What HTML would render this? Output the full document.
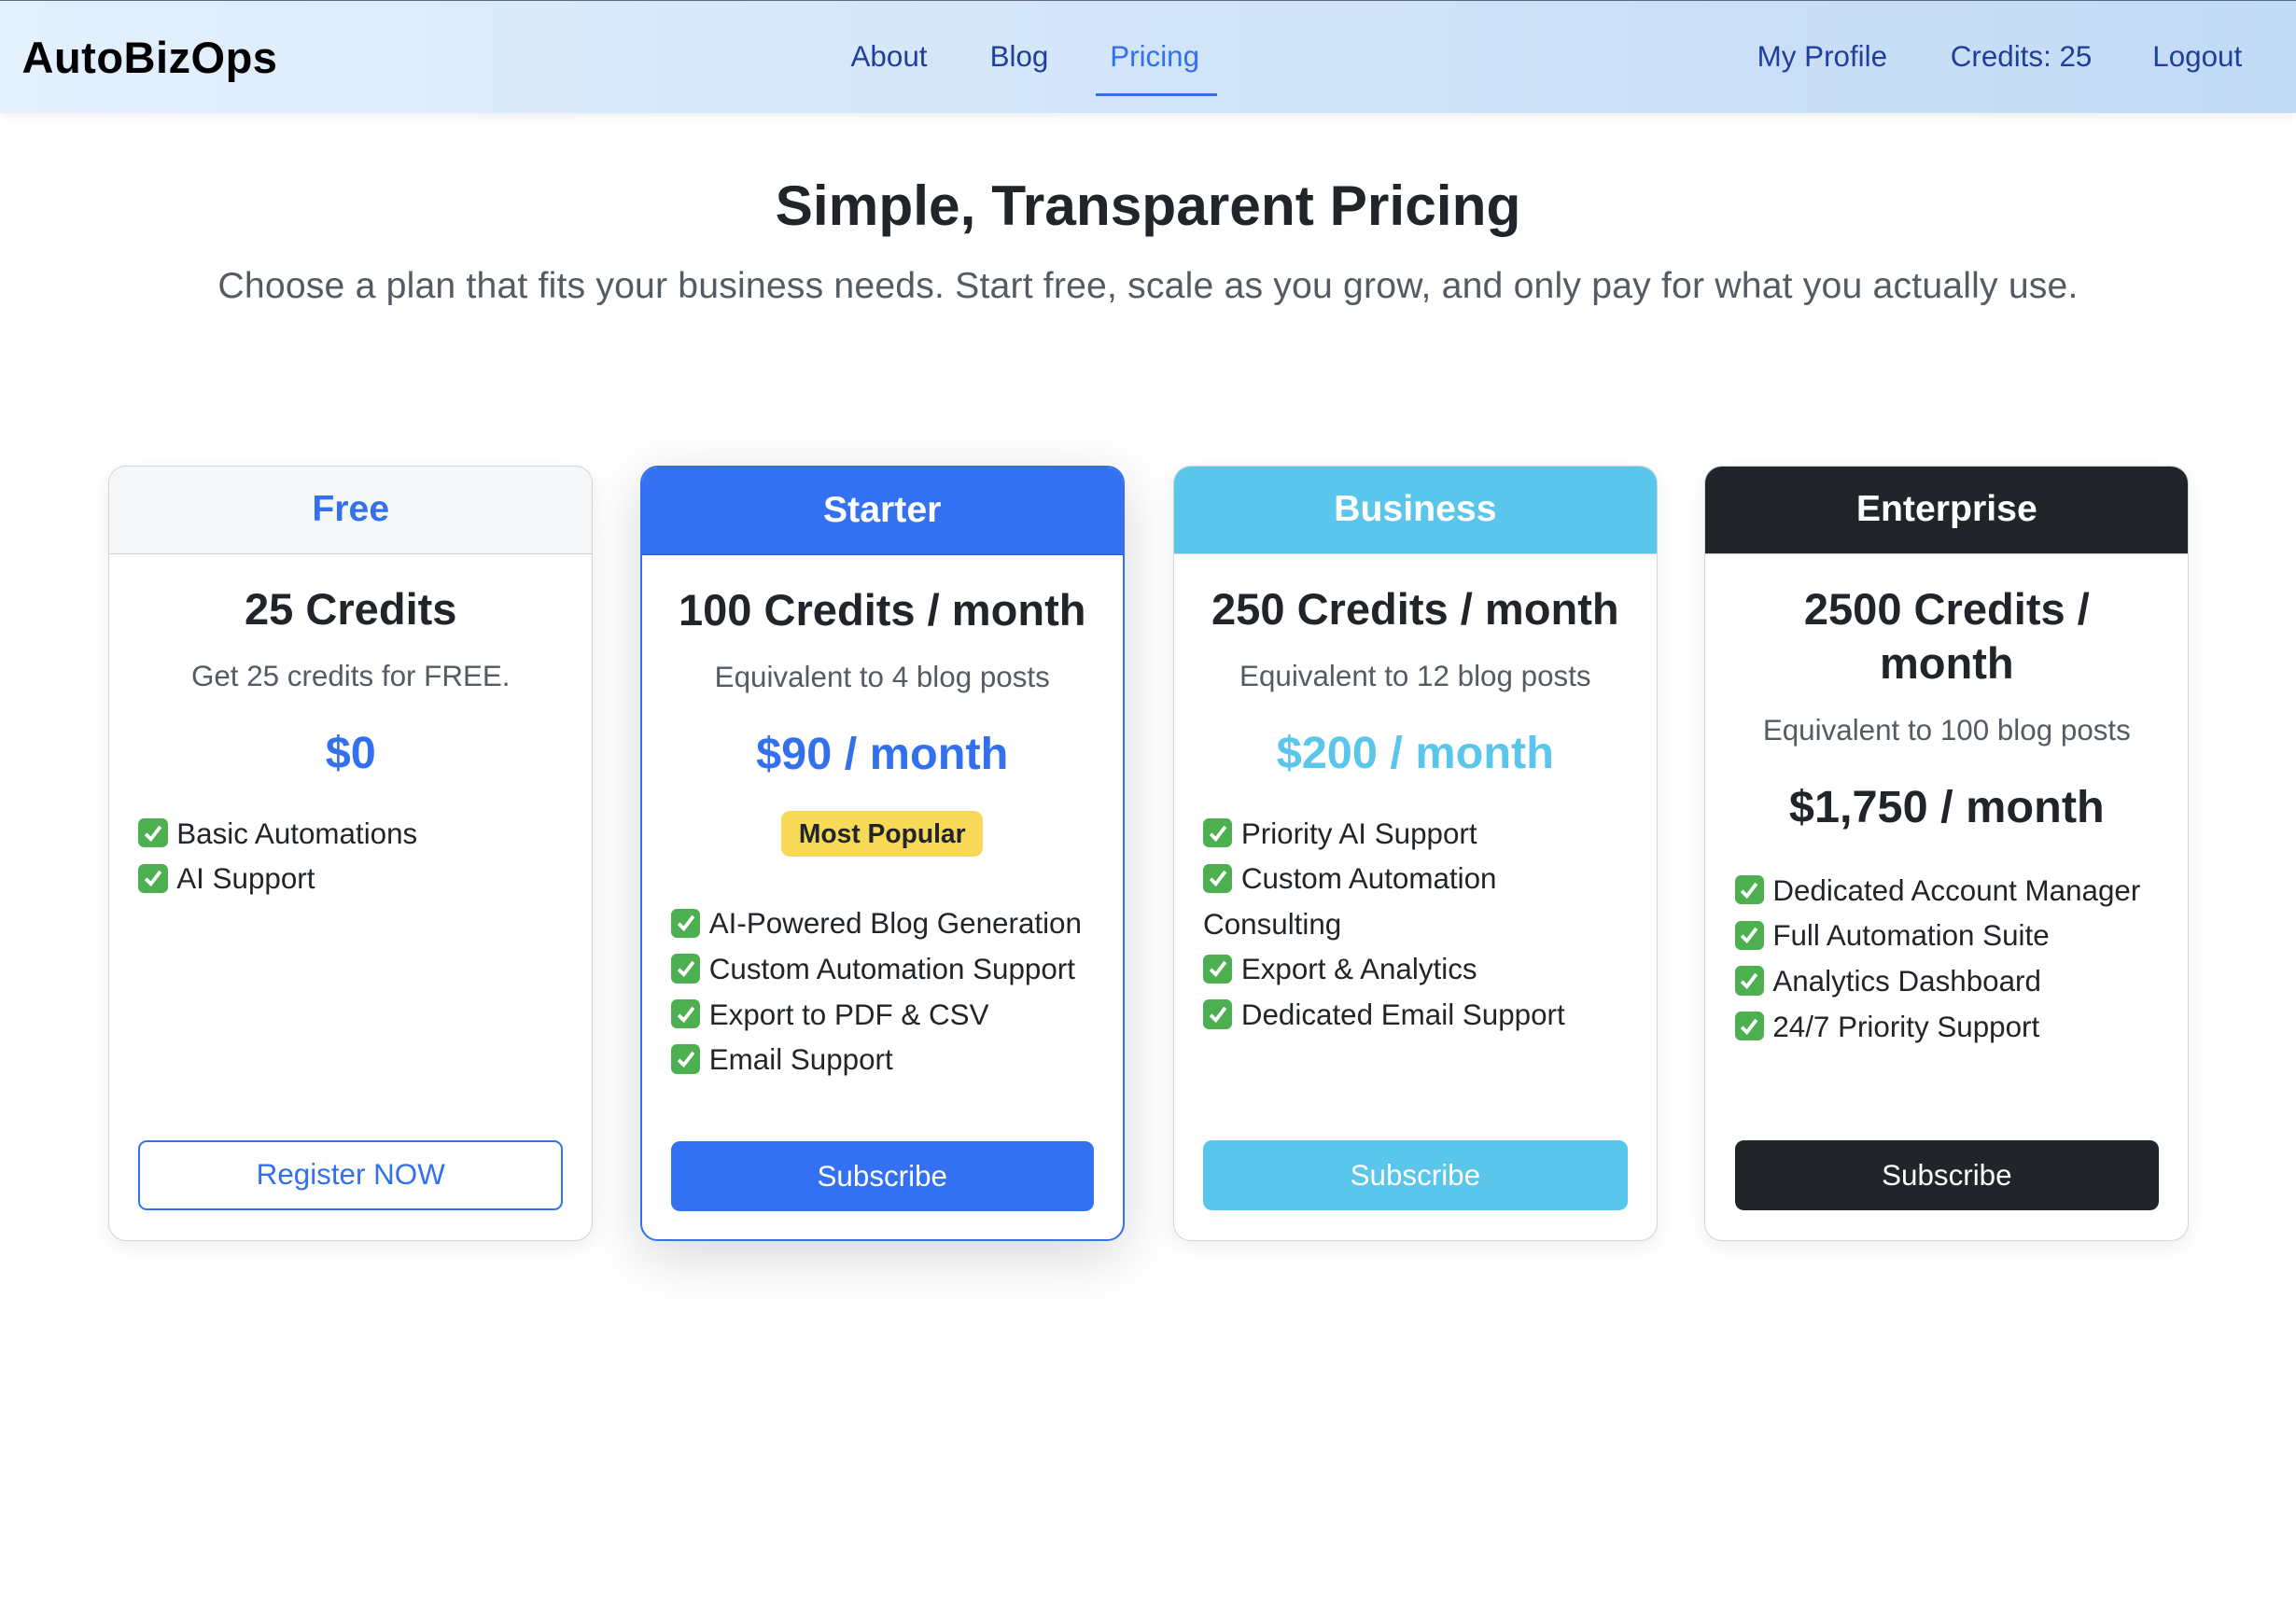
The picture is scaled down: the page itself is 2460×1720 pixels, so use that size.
<!DOCTYPE html>
<html><head><meta charset="utf-8">
<style>
html{zoom:1.56888}
*{box-sizing:border-box;margin:0;padding:0}
body{width:1568px;height:1096px;overflow:hidden;background:#fff;font-family:"Liberation Sans",Arial,sans-serif;color:#212529;position:relative}
.nav{position:absolute;left:0;top:0;width:1568px;height:77px;background:linear-gradient(90deg,#e4f0fc,#cfe2f8 60%,#c2dbf5);border-top:1px solid #5a6a80;box-shadow:0 2px 6px rgba(0,0,0,.08)}
.logo{position:absolute;left:15px;top:21px;font-size:30px;font-weight:bold;color:#000;letter-spacing:0.3px;transform:scaleX(1.0);transform-origin:left}
.nl{position:absolute;top:27px;font-size:20px;color:#1f3f9a}
.act{color:#3370ee}
.ul{position:absolute;left:748px;top:63px;width:83px;height:2px;background:#3370ee}
h1{position:absolute;left:0;width:1568px;top:118px;text-align:center;font-size:38.5px;font-weight:bold}
.sub{position:absolute;left:0;width:1568px;top:181px;text-align:center;font-size:25px;letter-spacing:0.1px;color:#555b62}
.card{position:absolute;top:318px;width:331px;height:530px;border:1px solid #d4d4d4;border-radius:12px;background:#fff;box-shadow:0 4px 14px rgba(0,0,0,.07);overflow:hidden}
.hd{height:60px;border-bottom:1px solid #d0d0d0;text-align:center;font-size:25px;font-weight:bold;line-height:58px;background:#f6f7f9;color:#3370ee}
.bd{padding:0 20px;text-align:center}
.t{font-size:30px;font-weight:bold;margin-top:19px;line-height:37px}
.d{font-size:20px;color:#555b62;margin-top:16px}
.p{font-size:31px;font-weight:bold;margin-top:23px;color:#3370ee}
.f{text-align:left;font-size:20px;line-height:31px;margin-top:22px}
.ck{display:inline-block;width:20px;height:20px;border-radius:4px;background:#4caf50;vertical-align:-3px;margin-right:6px;position:relative}
.ck svg{position:absolute;left:3px;top:3px}
.btn{position:absolute;left:20px;right:20px;top:460px;height:48px;border-radius:6px;text-align:center;line-height:48px;font-size:20px;color:#fff}
.badge{display:inline-block;background:#f7d857;border-radius:6px;padding:0 12px;height:31px;line-height:31px;font-size:18px;font-weight:bold;margin-top:21px}
</style></head><body>
<div class="nav">
<div class="logo">AutoBizOps</div>
<div class="nl" style="left:581px">About</div>
<div class="nl" style="left:676px">Blog</div>
<div class="nl act" style="left:758px">Pricing</div>
<div class="ul"></div>
<div class="nl" style="left:1200px">My Profile</div>
<div class="nl" style="left:1332px">Credits: 25</div>
<div class="nl" style="left:1470px">Logout</div>
</div>
<h1>Simple, Transparent Pricing</h1>
<div class="sub">Choose a plan that fits your business needs. Start free, scale as you grow, and only pay for what you actually use.</div>

<div class="card" style="left:74px">
<div class="hd">Free</div>
<div class="bd">
<div class="t">25 Credits</div>
<div class="d">Get 25 credits for FREE.</div>
<div class="p">$0</div>
<div class="f">
<div><span class="ck"><svg width="14" height="14" viewBox="0 0 14 14"><path d="M2 7.5L5.5 11L12 2.5" stroke="#fff" stroke-width="2.4" fill="none"/></svg></span>Basic Automations</div>
<div><span class="ck"><svg width="14" height="14" viewBox="0 0 14 14"><path d="M2 7.5L5.5 11L12 2.5" stroke="#fff" stroke-width="2.4" fill="none"/></svg></span>AI Support</div>
</div></div>
<div class="btn" style="border:1.5px solid #3370ee;color:#3370ee;background:#fff;line-height:45px">Register NOW</div>
</div>

<div class="card" style="left:437px;border:1.5px solid #3370ee;box-shadow:0 10px 40px rgba(0,0,0,.16)">
<div class="hd" style="background:#3370f2;color:#fff;border-bottom-color:#2a5fd8">Starter</div>
<div class="bd">
<div class="t">100 Credits / month</div>
<div class="d">Equivalent to 4 blog posts</div>
<div class="p">$90 / month</div>
<div class="badge">Most Popular</div>
<div class="f" style="margin-top:31px">
<div><span class="ck"><svg width="14" height="14" viewBox="0 0 14 14"><path d="M2 7.5L5.5 11L12 2.5" stroke="#fff" stroke-width="2.4" fill="none"/></svg></span>AI-Powered Blog Generation</div>
<div><span class="ck"><svg width="14" height="14" viewBox="0 0 14 14"><path d="M2 7.5L5.5 11L12 2.5" stroke="#fff" stroke-width="2.4" fill="none"/></svg></span>Custom Automation Support</div>
<div><span class="ck"><svg width="14" height="14" viewBox="0 0 14 14"><path d="M2 7.5L5.5 11L12 2.5" stroke="#fff" stroke-width="2.4" fill="none"/></svg></span>Export to PDF &amp; CSV</div>
<div><span class="ck"><svg width="14" height="14" viewBox="0 0 14 14"><path d="M2 7.5L5.5 11L12 2.5" stroke="#fff" stroke-width="2.4" fill="none"/></svg></span>Email Support</div>
</div></div>
<div class="btn" style="background:#3370f2">Subscribe</div>
</div>

<div class="card" style="left:801px">
<div class="hd" style="background:#5bc6ec;color:#fff">Business</div>
<div class="bd">
<div class="t">250 Credits / month</div>
<div class="d">Equivalent to 12 blog posts</div>
<div class="p" style="color:#5bc6ec">$200 / month</div>
<div class="f">
<div><span class="ck"><svg width="14" height="14" viewBox="0 0 14 14"><path d="M2 7.5L5.5 11L12 2.5" stroke="#fff" stroke-width="2.4" fill="none"/></svg></span>Priority AI Support</div>
<div><span class="ck"><svg width="14" height="14" viewBox="0 0 14 14"><path d="M2 7.5L5.5 11L12 2.5" stroke="#fff" stroke-width="2.4" fill="none"/></svg></span>Custom Automation Consulting</div>
<div><span class="ck"><svg width="14" height="14" viewBox="0 0 14 14"><path d="M2 7.5L5.5 11L12 2.5" stroke="#fff" stroke-width="2.4" fill="none"/></svg></span>Export &amp; Analytics</div>
<div><span class="ck"><svg width="14" height="14" viewBox="0 0 14 14"><path d="M2 7.5L5.5 11L12 2.5" stroke="#fff" stroke-width="2.4" fill="none"/></svg></span>Dedicated Email Support</div>
</div></div>
<div class="btn" style="background:#5bc6ec">Subscribe</div>
</div>

<div class="card" style="left:1164px">
<div class="hd" style="background:#212529;color:#fff">Enterprise</div>
<div class="bd">
<div class="t">2500 Credits /<br>month</div>
<div class="d">Equivalent to 100 blog posts</div>
<div class="p" style="color:#212529">$1,750 / month</div>
<div class="f" style="margin-top:24px">
<div><span class="ck"><svg width="14" height="14" viewBox="0 0 14 14"><path d="M2 7.5L5.5 11L12 2.5" stroke="#fff" stroke-width="2.4" fill="none"/></svg></span>Dedicated Account Manager</div>
<div><span class="ck"><svg width="14" height="14" viewBox="0 0 14 14"><path d="M2 7.5L5.5 11L12 2.5" stroke="#fff" stroke-width="2.4" fill="none"/></svg></span>Full Automation Suite</div>
<div><span class="ck"><svg width="14" height="14" viewBox="0 0 14 14"><path d="M2 7.5L5.5 11L12 2.5" stroke="#fff" stroke-width="2.4" fill="none"/></svg></span>Analytics Dashboard</div>
<div><span class="ck"><svg width="14" height="14" viewBox="0 0 14 14"><path d="M2 7.5L5.5 11L12 2.5" stroke="#fff" stroke-width="2.4" fill="none"/></svg></span>24/7 Priority Support</div>
</div></div>
<div class="btn" style="background:#212529">Subscribe</div>
</div>
</body></html>
